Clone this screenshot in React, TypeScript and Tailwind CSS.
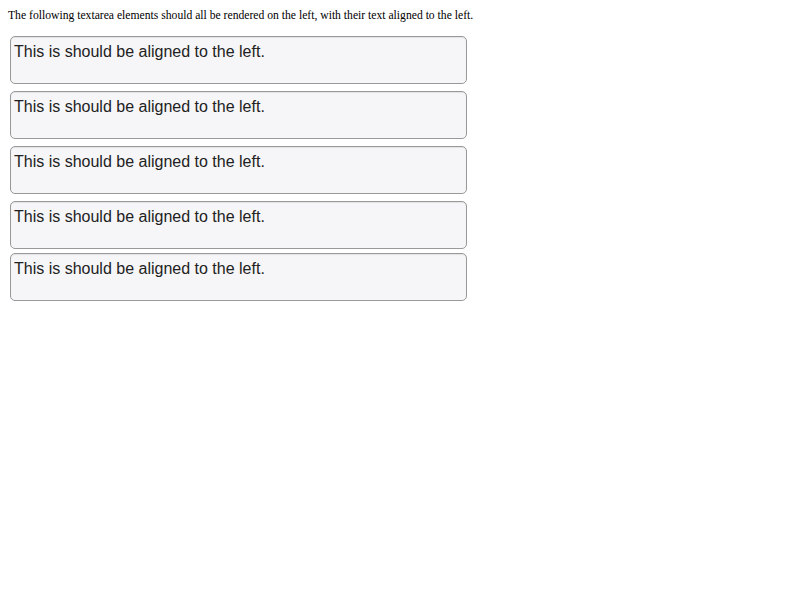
import React from "react";

const Box = () => (
  <div
    className="w-[457px] h-[48px] border border-[#999999] rounded-[5px] bg-[#f6f6f8] shadow-[inset_0_1px_1px_rgba(0,0,0,0.08)] px-[3px] pt-[6px] text-[16px] leading-[18px] text-[#222]"
    style={{ fontFamily: '"Liberation Sans", Arial, sans-serif' }}
  >
    This is should be aligned to the left.
  </div>
);

export default function App() {
  return (
    <div className="bg-white min-h-[600px] pt-[8px] px-[8px]">
      <p
        className="text-[11.65px] leading-[14px] text-black mt-[1px]"
        style={{ fontFamily: '"Liberation Serif", "Times New Roman", serif' }}
      >
        The following textarea elements should all be rendered on the left, with their text aligned to the left.
      </p>
      <div className="flex flex-col pl-[2px] mt-[13px]">
        <Box />
        <div className="h-[7px]" />
        <Box />
        <div className="h-[7px]" />
        <Box />
        <div className="h-[7px]" />
        <Box />
        <div className="h-[4px]" />
        <Box />
      </div>
    </div>
  );
}
